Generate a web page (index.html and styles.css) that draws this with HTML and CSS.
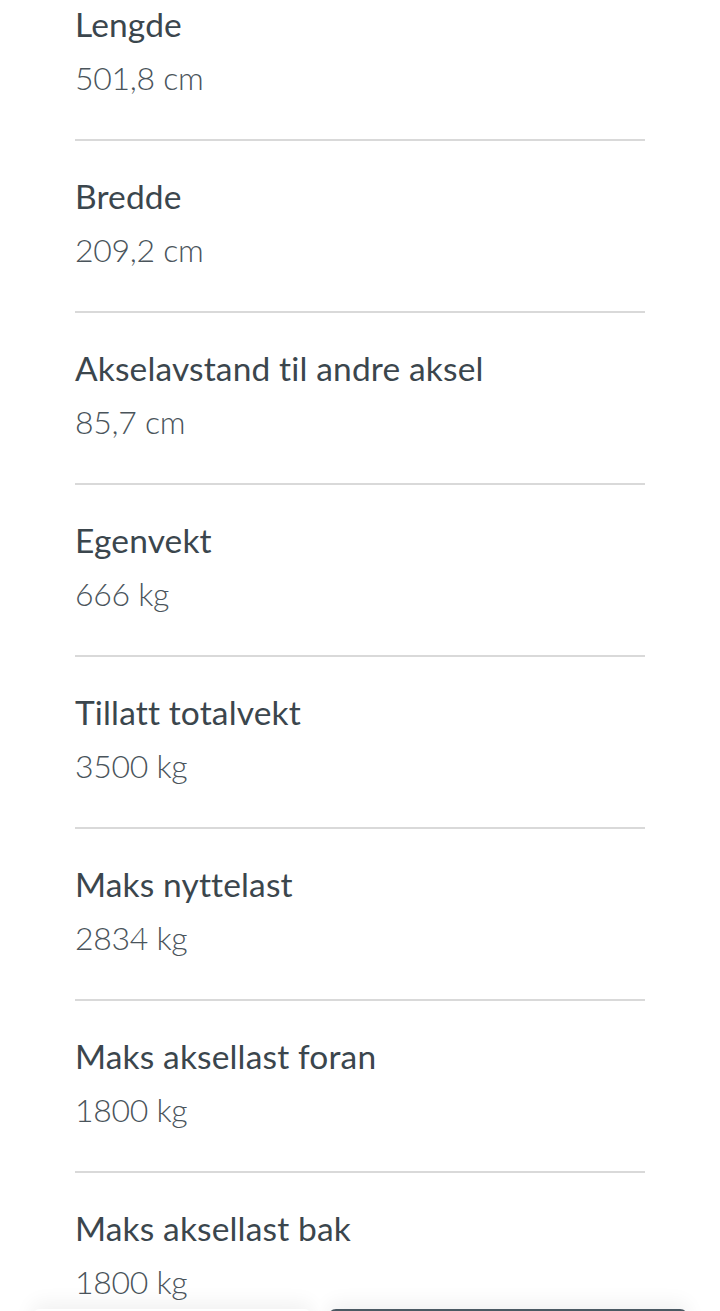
FILE: index.html
```html
<!DOCTYPE html>
<html lang="no">
<head>
  <meta charset="UTF-8" />
  <meta name="viewport" content="width=device-width, initial-scale=1.0"/>
  <title>Tekniske data</title>
  <link rel="stylesheet" href="styles.css">
</head>
<body>

  <!-- Spesifikasjoner -->
  <dl class="spec-list">
    <div class="spec-item">
      <dt class="spec-label">Lengde</dt>
      <dd class="spec-value">501,8 cm</dd>
    </div>
    <div class="spec-item">
      <dt class="spec-label">Bredde</dt>
      <dd class="spec-value">209,2 cm</dd>
    </div>
    <div class="spec-item">
      <dt class="spec-label">Akselavstand til andre aksel</dt>
      <dd class="spec-value">85,7 cm</dd>
    </div>
    <div class="spec-item">
      <dt class="spec-label">Egenvekt</dt>
      <dd class="spec-value">666 kg</dd>
    </div>
    <div class="spec-item">
      <dt class="spec-label">Tillatt totalvekt</dt>
      <dd class="spec-value">3500 kg</dd>
    </div>
    <div class="spec-item">
      <dt class="spec-label">Maks nyttelast</dt>
      <dd class="spec-value">2834 kg</dd>
    </div>
    <div class="spec-item">
      <dt class="spec-label">Maks aksellast foran</dt>
      <dd class="spec-value">1800 kg</dd>
    </div>
    <div class="spec-item">
      <dt class="spec-label">Maks aksellast bak</dt>
      <dd class="spec-value">1800 kg</dd>
    </div>
  </dl>

  <!-- Footer Buttons (kun toppkanten synes) -->
  <div class="footer-buttons">
    <button class="btn-secondary" aria-label="Del"></button>
    <button class="btn-primary" aria-label="Kontakt forhandler"></button>
  </div>

</body>
</html>
```

FILE: styles.css
```css
body {
  margin: 0;
  padding: 0;
  background: #ffffff;
  font-family: Lato, 'Open Sans', sans-serif;
  color: #3b464d;
  overflow: hidden;
}

.spec-list {
  margin: -31px 75px 0 75px;
  padding: 0;
}

.spec-item {
  padding: 35px 0 41px;
  border-bottom: 2px solid #d9d9d9;
}

.spec-label {
  font-size: 33.5px;
  line-height: 40px;
  font-weight: 400;
  letter-spacing: 0.15px;
  color: #3b464d;
}

.spec-value {
  margin: 14px 0 0 0;
  font-size: 32px;
  line-height: 40px;
  font-weight: 300;
  letter-spacing: -0.3px;
  color: #4a545b;
}

/* Footer */
.footer-buttons {
  position: fixed;
  left: 0;
  right: 0;
  top: 1309px;
  display: flex;
  gap: 16px;
  padding: 0 32px;
}

.footer-buttons button {
  height: 60px;
  border: none;
  border-radius: 8px;
  cursor: pointer;
}

.btn-secondary {
  width: 280px;
  background: #ffffff;
  box-shadow: 0 -6px 20px rgba(0,0,0,0.06);
}

.btn-primary {
  flex: 1;
  background: #4b5963;
  box-shadow: 0 -6px 20px rgba(0,0,0,0.06);
}
```
